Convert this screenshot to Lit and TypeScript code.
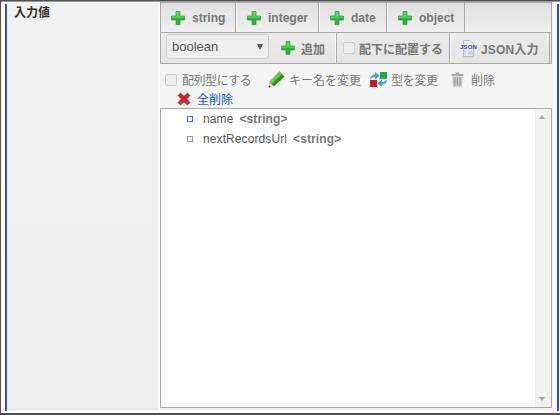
import { LitElement, html, css } from "lit";
import { customElement } from "lit/decorators.js";

const plus = html`<svg class="ic" width="16" height="16" viewBox="0 0 16 16"><path d="M6 1.500h4v4.500h4.500v4H10v4.500H6V10H1.500V6H6z" fill="#2fb040" stroke="#1f8f2c" stroke-width=".6"/><path d="M6.500 2h3v4.500H14v1.200H2V6.500h4.500z" fill="#5cd468"/></svg>`;
const pencil = html`<svg class="ic" width="17" height="17" viewBox="0 0 17 17"><path d="M11.500.5L16.500 5.500 6 15.500 1.500 11z" fill="#2f8f24"/><path d="M11.500.5L14 3 4 13 1.500 11z" fill="#74c244"/><path d="M1.500 11L6 15.500 .5 16.500z" fill="#e6cfa2"/><path d="M1 14.200L2.800 16 .5 16.500z" fill="#3a3a3a"/></svg>`;
const convert = html`<svg class="ic" width="17" height="15" viewBox="0 0 17 15"><rect x="10.300" y="0.300" width="6.400" height="6" fill="#17b23a" stroke="#0f8a2a" stroke-width=".6"/><rect x="0.300" y="8.300" width="6.400" height="6.400" fill="#c9171e" stroke="#97101a" stroke-width=".6"/><path d="M0 7.500C.3 4 2.500 2.500 5 2.500V0l4.500 3.700L5 7.500V5.200C3 5.200 1.500 5.800 0 7.500z" fill="#3d9df0"/><path d="M17 7.500c-.3 3.500-2.500 5-5 5V15L7.500 11.300 12 7.500v2.300c2 0 3.500-.6 5-2.300z" fill="#3d9df0"/></svg>`;
const trash = html`<svg class="ic" width="13" height="15" viewBox="0 0 13 15"><path d="M4.500 .5h4V2h3.500l.5 2H.5l.5-2h3.500z" fill="#a8a8a8"/><path d="M1.500 4.500h10l-.5 10H2z" fill="#c4c4c4"/><path d="M4 5.500v8M6.500 5.500v8M9 5.500v8" stroke="#9c9c9c" stroke-width="1"/></svg>`;
const cross = html`<svg class="ic" width="14" height="14" viewBox="0 0 14 14"><path d="M1 3.500L3.500 1 7 4.300 10.500 1 13 3.500 9.700 7 13 10.500 10.500 13 7 9.700 3.500 13 1 10.500 4.300 7z" fill="#c9252d" stroke="#9e1a20" stroke-width=".5"/></svg>`;
const jsonDoc = html`<svg class="ic" width="17" height="17" viewBox="0 0 17 17"><path d="M3.500 .5h7l3 3v13h-10z" fill="#e8eaef" stroke="#aeb2bb" stroke-width=".8"/><path d="M8 12l5 0M8 14h5M5 11v4" stroke="#b8bcc4"/><text x="0" y="8.500" class="json">JSON</text></svg>`;

@customElement("app-root")
export class AppRoot extends LitElement {
  static styles = css`
    :host { display: block; width: 560px; height: 415px; overflow: hidden; font-family: "Liberation Sans", "Noto Sans CJK JP", sans-serif; }
    .frame { box-sizing: border-box; width: 560px; height: 415px; background: #fff; border: solid #505050; border-width: 1px 0 2px 1px; padding: 1px 1px 2px 4px; box-shadow: inset 0 1px #999; }
    .row { display: grid; grid-template-columns: 2px 151px 2px 394px 1px 2px 2px; height: 409px; }
    .bar { background: #35549c; margin-top: 2px; }
    .label { background: linear-gradient(#f1f1f1, #ededed); padding: 4px 7px; font-size: 12px; font-weight: bold; color: #333; line-height: 14px; }
    .gap { background: #fff; }
    .strip { background: #f2f2f2; }
    .main { box-sizing: border-box; background: #f4f4f4; display: flex; flex-direction: column; height: 409px; padding: 0 2px 3px 0; }
    .tabs { display: flex; flex: none; height: 31px; box-sizing: border-box; border: 1px solid #aaa; background: linear-gradient(#dfdfdf, #efefef); }
    .tab { box-sizing: border-box; display: flex; align-items: center; gap: 6px; font-size: 12px; font-weight: bold; color: #777; padding: 0 0 0 10px; border-right: 1px solid #aaa; box-shadow: inset 1px 0 #f6f6f6; }
    .tab:nth-child(1) { width: 75px; padding-left: 9px; box-shadow: none; }
    .tab:nth-child(2) { width: 83px; }
    .tab:nth-child(3) { width: 68px; }
    .tab:nth-child(4) { width: 78px; }
    .tools { display: flex; flex: none; height: 31px; box-sizing: border-box; border: 1px solid #aaa; border-top: none; background: linear-gradient(#ebebeb, #e3e3e3); }
    .sel { box-sizing: border-box; width: 103px; height: 25px; margin: 1px 0 0 5px; border: 1px solid #ccc; border-radius: 3px; background: #eeeeee; color: #555; font-size: 13px; display: flex; align-items: center; justify-content: space-between; padding: 0 5px 0 5px; }
    .tri { width: 0; height: 0; border: solid transparent; border-width: 6px 3px 0; border-top-color: #555; }
    .t { box-sizing: border-box; display: flex; align-items: center; font-size: 12px; font-weight: bold; color: #777; border-right: 1px solid #aaa; }
    .add { width: 68px; padding-left: 11px; gap: 5px; box-shadow: inset -1px 0 #f8f8f8; }
    .place { width: 113px; padding-left: 6px; gap: 4px; }
    .jsonb { width: 100px; padding-left: 10px; gap: 4px; letter-spacing: .15px; box-shadow: inset 1px 0 #f6f6f6; }
    .cb { box-sizing: border-box; width: 12px; height: 12px; border: 1px solid #ccc; border-radius: 2px; background: #eee; flex: none; }
    .actions { flex: none; height: 44px; box-sizing: border-box; padding: 7px 0 0 5px; font-size: 12px; color: #777; }
    .line { display: flex; align-items: center; height: 17px; }
    .a { display: flex; align-items: center; gap: 4px; }
    .l1 .a:nth-child(1) { width: 103px; gap: 5px; letter-spacing: -.45px; }
    .l1 .a:nth-child(2) { width: 102px; }
    .l1 .a:nth-child(3) { width: 81px; letter-spacing: -.3px; }
    .l1 .a:nth-child(4) { gap: 7px; }
    .line2 { padding-left: 12px; gap: 6px; margin-top: 2px; }
    .link { color: #0b55c4; }
    .box { flex: 1; box-sizing: border-box; border: 1px solid #aaa; background: #fff; display: flex; }
    .tree { flex: 1; padding: 0 0 0 26px; font-size: 12px; color: #555; letter-spacing: .1px; }
    .node { display: flex; align-items: center; height: 20px; }
    .sq { box-sizing: content-box; width: 4px; height: 4px; border: 1px solid #999; margin-right: 10px; flex: none; }
    .sq.on { border-color: #3a6fe0; }
    .ty { font-weight: bold; color: #777; margin-left: 6px; }
    .scroll { width: 16px; background: #f0f0f0; position: relative; }
    .up, .down { position: absolute; left: 4px; width: 0; height: 0; border: solid transparent; border-width: 0 3.500px; }
    .up { top: 6px; border-bottom: 4px solid #a6a6a6; }
    .down { bottom: 6px; border-top: 4px solid #a6a6a6; }
    .ic { flex: none; display: block; }
    .json { font: bold 6px "Liberation Sans", sans-serif; fill: #2a4f9e; }
  `;

  render() {
    return html`<div class="frame"><div class="row">
      <div class="bar"></div>
      <div class="label">入力値</div>
      <div class="gap"></div>
      <div class="main">
        <div class="tabs">
          ${["string", "integer", "date", "object"].map((n) => html`<div class="tab">${plus}<span>${n}</span></div>`)}
        </div>
        <div class="tools">
          <div class="sel"><span>boolean</span><i class="tri"></i></div>
          <div class="t add">${plus}<span>追加</span></div>
          <div class="t place"><i class="cb"></i><span>配下に配置する</span></div>
          <div class="t jsonb">${jsonDoc}<span>JSON入力</span></div>
        </div>
        <div class="actions">
          <div class="line l1">
            <div class="a"><i class="cb"></i><span>配列型にする</span></div>
            <div class="a">${pencil}<span>キー名を変更</span></div>
            <div class="a">${convert}<span>型を変更</span></div>
            <div class="a">${trash}<span>削除</span></div>
          </div>
          <div class="line line2">${cross}<span class="link">全削除</span></div>
        </div>
        <div class="box">
          <div class="tree">
            <div class="node"><i class="sq on"></i><span>name</span><span class="ty">&lt;string&gt;</span></div>
            <div class="node"><i class="sq"></i><span>nextRecordsUrl</span><span class="ty">&lt;string&gt;</span></div>
          </div>
          <div class="scroll"><i class="up"></i><i class="down"></i></div>
        </div>
      </div>
      <div class="gap"></div>
      <div class="strip"></div>
      <div class="bar"></div>
    </div></div>`;
  }
}
